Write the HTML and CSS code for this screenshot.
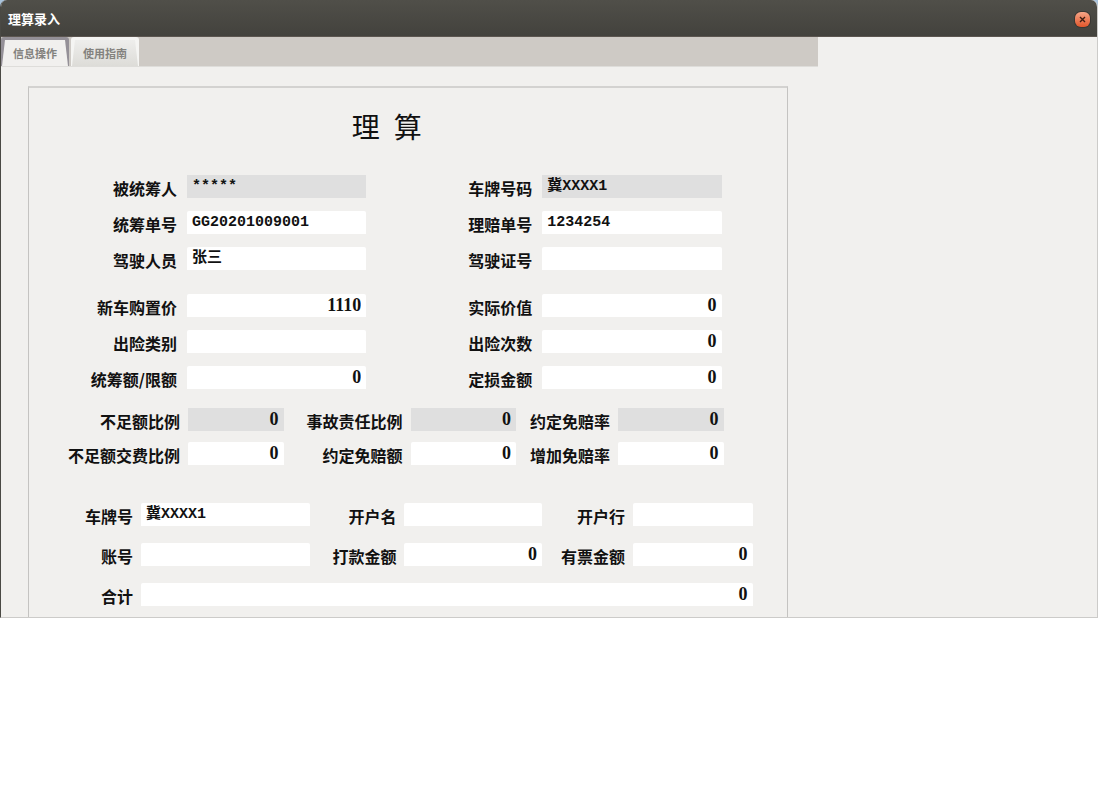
FILE: index.html
```html
<!DOCTYPE html>
<html lang="zh-CN">
<head>
    <meta charset="UTF-8">
    <meta name="viewport" content="width=device-width, initial-scale=1.0">
    <title>理算录入</title>
    <link rel="stylesheet" href="styles.css">
</head>
<body>

    <div class="window">
        <header class="titlebar">
            <h1>理算录入</h1>
            <button type="button" class="close" aria-label="关闭">
                <svg width="7" height="7" viewBox="0 0 7 7"><path d="M1 1l5 5M6 1l-5 5" stroke="#3c1d12" stroke-width="1.4"/></svg>
            </button>
        </header>

        <main class="workspace">
            <nav class="tabs">
                <button type="button" class="tab active">信息操作</button>
                <button type="button" class="tab">使用指南</button>
            </nav>

            <form class="sheet">
                <h2>理&nbsp;&nbsp;算</h2>

                <div class="fields basic">
                    <label for="insured">被统筹人</label>
                    <input type="text" id="insured" value="*****" readonly>
                    <label for="plate">车牌号码</label>
                    <input type="text" id="plate" value="冀XXXX1" readonly>

                    <label for="policy">统筹单号</label>
                    <input type="text" id="policy" value="GG20201009001">
                    <label for="claim">理赔单号</label>
                    <input type="text" id="claim" value="1234254">

                    <label for="driver">驾驶人员</label>
                    <input type="text" id="driver" value="张三">
                    <label for="licence">驾驶证号</label>
                    <input type="text" id="licence">
                </div>

                <div class="fields basic price">
                    <label for="newPrice">新车购置价</label>
                    <input type="text" class="num" id="newPrice" value="1110">
                    <label for="realValue">实际价值</label>
                    <input type="text" class="num" id="realValue" value="0">

                    <label for="kind">出险类别</label>
                    <input type="text" id="kind">
                    <label for="times">出险次数</label>
                    <input type="text" class="num" id="times" value="0">

                    <label for="limit">统筹额/限额</label>
                    <input type="text" class="num" id="limit" value="0">
                    <label for="loss">定损金额</label>
                    <input type="text" class="num" id="loss" value="0">
                </div>

                <div class="fields ratio">
                    <label for="shortRate">不足额比例</label>
                    <input type="text" class="num" id="shortRate" value="0" readonly>
                    <label for="dutyRate">事故责任比例</label>
                    <input type="text" class="num" id="dutyRate" value="0" readonly>
                    <label for="freeRate">约定免赔率</label>
                    <input type="text" class="num" id="freeRate" value="0" readonly>

                    <label for="payRate">不足额交费比例</label>
                    <input type="text" class="num" id="payRate" value="0">
                    <label for="freeAmount">约定免赔额</label>
                    <input type="text" class="num" id="freeAmount" value="0">
                    <label for="extraRate">增加免赔率</label>
                    <input type="text" class="num" id="extraRate" value="0">
                </div>

                <div class="fields account">
                    <label for="plateNo">车牌号</label>
                    <input type="text" id="plateNo" value="冀XXXX1">
                    <label for="owner">开户名</label>
                    <input type="text" id="owner">
                    <label for="bank">开户行</label>
                    <input type="text" id="bank">

                    <label for="accountNo">账号</label>
                    <input type="text" id="accountNo">
                    <label for="payment">打款金额</label>
                    <input type="text" class="num" id="payment" value="0">
                    <label for="invoice">有票金额</label>
                    <input type="text" class="num" id="invoice" value="0">

                    <label for="total">合计</label>
                    <input type="text" class="num total" id="total" value="0">
                </div>
            </form>
        </main>
    </div>

</body>
</html>
```

FILE: styles.css
```css
* {
    box-sizing: border-box;
}

body {
    margin: 0;
    background: #fff linear-gradient(#a9c3dc, #a9c3dc) no-repeat 0 0 / 100% 8px;
    font-family: "Noto Sans CJK SC", sans-serif;
    color: #111;
}

.window {
    background-color: #f1f0ee;
    border: 1px solid #cccbc9;
    border-top: 0;
    border-left-color: #4a4944;
    border-radius: 7px 7px 0 0;
    overflow: hidden;
}

/* title bar */
.titlebar {
    display: flex;
    align-items: center;
    justify-content: space-between;
    height: 37px;
    padding: 0 7px;
    background: linear-gradient(#504f49, #43423d);
    border-bottom: 1px solid #5c5650;
}

.titlebar h1 {
    margin: 0;
    font-size: 13px;
    font-weight: bold;
    color: #fff;
}

.close {
    display: flex;
    align-items: center;
    justify-content: center;
    width: 15px;
    height: 15px;
    margin-top: 2px;
    padding: 0;
    border: 0;
    border-radius: 6px;
    background: linear-gradient(#f6a587, #e2562b);
    box-shadow: 0 0 0 1px #3a3733;
}

/* tabs */
.workspace {
    width: 74.5%;
}

.tabs {
    display: flex;
    gap: 2px;
    height: 30px;
    background-color: #cecac5;
    border-bottom: 1px solid #deddda;
}

.tab {
    position: relative;
    z-index: 0;
    padding: 2px 12px 0;
    border: 0;
    border-radius: 3px 3px 0 0;
    background-color: #f5f5f3;
    font-family: inherit;
    font-size: 11px;
    font-weight: bold;
    color: #83827e;
}

/* sloped face of the tab */
.tab::before {
    content: "";
    position: absolute;
    inset: 3px 1px 0;
    z-index: -1;
    background: linear-gradient(#eeeeec, #dddcd8);
    clip-path: polygon(3px 0, calc(100% - 3px) 0, 100% 100%, 0 100%);
}

.tab.active {
    background-color: #949097;
}

.tab.active::before {
    background: #f1f0ee;
}

/* form */
.sheet {
    margin: 19px 30px 0 27px;
    padding-bottom: 11px;
    border: 1px solid #c4c3c1;
    border-top: 2px solid #d3d2d0;
    border-bottom: 0;
}

.sheet h2 {
    margin: 0;
    padding: 21px 42px 26px 0;
    font-family: "Liberation Serif", "Noto Sans CJK SC", serif;
    font-size: 28px;
    font-weight: normal;
    line-height: 40px;
    text-align: center;
}

.fields {
    display: grid;
    column-gap: 8px;
}

.basic {
    grid-template-columns: 148px 1fr 156px 1fr;
    gap: 13px 10px;
    padding-right: 65px;
}

.price {
    margin-top: 24px;
}

.ratio {
    grid-template-columns: 151px 96fr 111px 106fr 86px 106fr;
    row-gap: 11px;
    margin-top: 19px;
    padding-right: 63px;
}

.account {
    grid-template-columns: 104px 170fr 78px 138fr 75px 120fr;
    row-gap: 17px;
    margin-top: 38px;
    padding-right: 34px;
}

label {
    padding-top: 4px;
    font-size: 16px;
    font-weight: bold;
    line-height: 19px;
    text-align: right;
    white-space: nowrap;
}

input {
    width: 100%;
    min-width: 0;
    height: 23px;
    padding: 0 5px;
    border: 0;
    border-radius: 2px 2px 0 0;
    background-color: #fff;
    font-family: "Liberation Mono", "Noto Sans CJK SC", monospace;
    font-size: 15px;
    font-weight: bold;
    line-height: 23px;
    color: #111;
}

input[readonly] {
    border-radius: 0;
    background-color: #dfdfdf;
}

.num {
    font-family: "Liberation Serif", serif;
    font-size: 18px;
    text-align: right;
}

.total {
    grid-column: 2 / -1;
}
```
